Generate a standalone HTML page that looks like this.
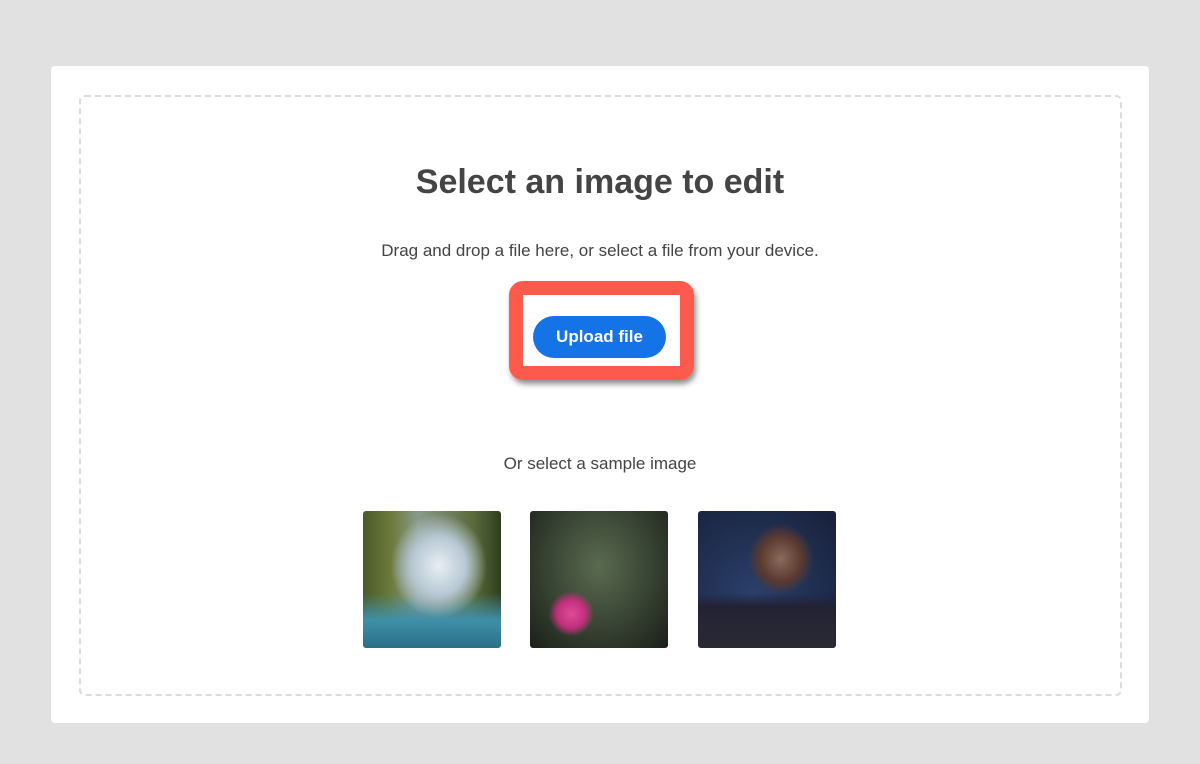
<!DOCTYPE html>
<html><head><style>
body{margin:0;width:1200px;height:764px;background:#e1e1e1;font-family:"Liberation Sans",sans-serif;position:relative;overflow:hidden}
.card{position:absolute;left:51px;top:66px;width:1098px;height:657px;background:#fff;border-radius:4px}
.dash{position:absolute;left:79px;top:95px;width:1039px;height:597px;border:2px dashed #dcdcdc;border-radius:6px}
h1{position:absolute;top:163px;left:0;width:1200px;text-align:center;margin:0;font-size:34px;color:#444;font-weight:bold}
.p{position:absolute;left:0;width:1200px;text-align:center;font-size:17px;color:#444}
.red{position:absolute;left:509px;top:281px;width:157px;height:71px;border:14px solid #fc5a4c;border-radius:14px;box-shadow:2px 4px 6px rgba(0,0,0,.45)}
.btn{position:absolute;left:533px;top:316px;width:133px;height:42px;background:#1473e6;border-radius:21px;color:#fff;font-weight:bold;font-size:17px;text-align:center;line-height:42px}
.img{position:absolute;top:511px;width:138px;height:137px;border-radius:3px}
</style></head><body>
<div class="card"></div><div class="dash"></div>
<h1>Select an image to edit</h1>
<div class="p" style="top:241px">Drag and drop a file here, or select a file from your device.</div>
<div class="red"></div>
<div class="btn">Upload file</div>
<div class="p" style="top:454px">Or select a sample image</div>
<div class="img" style="left:363px;background:radial-gradient(ellipse at 55% 40%,#e8eef2 0,#b7c8d4 25%,transparent 45%),linear-gradient(to bottom,transparent 60%,#3f8fa8 80%,#2a6f87),linear-gradient(to right,#4a5a2a,#6c7a3a 20%,#8a9a8a 40%,#5a6a3a 80%,#2f3f1e)"></div>
<div class="img" style="left:530px;background:radial-gradient(circle at 30% 75%,#e04a9a 0,#c0307a 10%,transparent 16%),radial-gradient(ellipse at 50% 40%,#5a6a50,#3a4635 50%,#1a1f18)"></div>
<div class="img" style="left:698px;background:radial-gradient(ellipse at 60% 35%,#8a6a5a 0,#5a3a30 18%,transparent 28%),linear-gradient(to bottom,transparent 60%,#223 70%,#2a2a35),radial-gradient(ellipse at 40% 60%,#2a3f6a,#17203a)"></div>
</body></html>
